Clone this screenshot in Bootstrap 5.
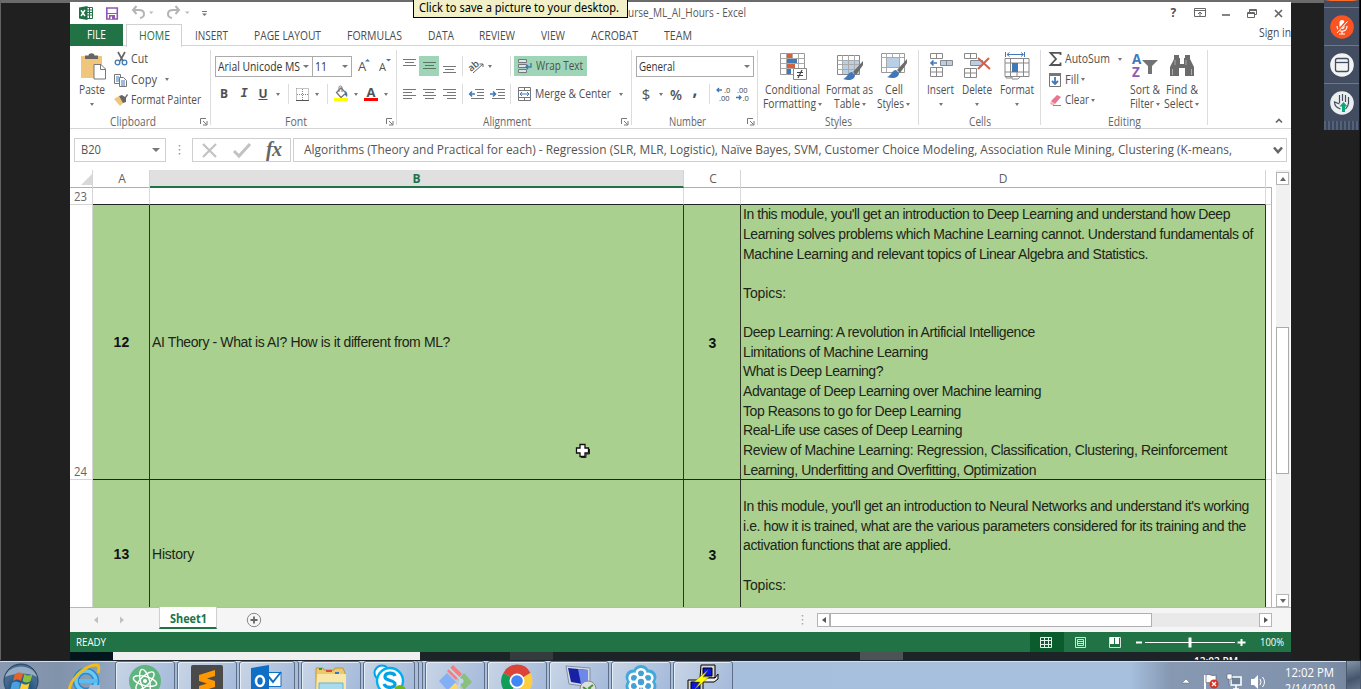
<!DOCTYPE html>
<html lang="en">
<head>
<meta charset="utf-8">
<title>Excel</title>
<link rel="stylesheet" href="https://cdn.jsdelivr.net/npm/bootstrap@5.3.0/dist/css/bootstrap.min.css">
<style>
body{width:1361px;height:689px;overflow:hidden;background:#202020;font-family:"Open Sans","Noto Sans",sans-serif;font-size:12px;line-height:1;color:#505050}
svg{display:block;flex:none;overflow:visible}
[data-w]{white-space:pre;display:inline-block;line-height:14px;flex:none;transform-origin:0 50%}
.desktop{width:1361px;height:660px;border-top:3px solid #6b6b6b;border-left:1px solid #626262;padding-left:69px}
.app{width:1221px;margin-top:-1px;background:#fff;height:658px}
/* title bar and tabs */
.titlebar{height:22px;padding-left:9px}
.titlebar .save{margin:0 13px}
.titlebar .doc{margin-left:429px;color:#5a5a5a}
.winbtns{margin-left:auto;display:grid;grid-template-columns:26px 26px 26px 26px 26px;justify-items:center;align-items:center}
.tabs{height:22px;border-bottom:1px solid #d5d5d5;display:grid;grid-template-columns:53px 3px 56px 59px 93px 81px 51px 62px 50px 73px 55px 1fr;justify-items:center;align-items:center;color:#4c4c4c}
.tabs>*{display:flex;justify-content:center;align-items:center}
.tabs .file{background:#217346;color:#fff;width:53px;height:22px;align-self:start}
.tabs .home{border:1px solid #d0d0d0;border-bottom:0;height:23px;width:56px;color:#217346;background:#fff;align-self:start}
.tabs .sign{justify-self:end;align-self:start;padding-top:2px}
/* ribbon */
.ribbon{height:83px;border-bottom:1px solid #d5d5d5}
.grp{display:flex;flex-direction:column;position:relative;height:82px;flex:none}
.grp::after{content:"";position:absolute;right:0;top:4px;height:75px;width:1px;background:#dcdcdc}
.grp .body{height:68px}
.grp .cap{height:14px;display:flex;justify-content:center;align-items:center;color:#666}
.grp .cap.lx{padding-right:15px}
.grp .cap [data-w]{padding-top:1px}
.launch{position:absolute;right:3px;bottom:2px}
.g1{width:141px}.g2{width:186px}.g3{width:235px}.g4{width:126px}.g5{width:161px}.g6{width:122px}.g7{width:167px}
.caret{width:0;height:0;border:solid transparent;border-width:3px 2.5px 0;border-top-color:#777;flex:none}
.combo .caret{border-width:3px 3px 0}
.vsep{width:1px;height:20px;background:#dcdcdc}
.big{display:flex;flex-direction:column;align-items:center;padding-top:6px}
.big svg{margin-bottom:3px}
.big .ln{height:14px;display:flex;align-items:center;gap:2px}
.rows{padding-top:3px}
.rrow{height:20.5px;display:flex;align-items:center}
.rrow .tight{margin-left:2px}
.ic{width:17px;flex:none}
.edit{width:81px}
.edit .ic{width:16px}
.gr{display:grid;justify-items:center;align-items:center}
.r1{height:20px;margin-top:10px}
.r2{height:22px;margin-top:7px}
.fr1{grid-template-columns:98px 39px 24px 15px;margin-left:4px}
.fr1>svg{margin-top:-3px}
.fr2{grid-template-columns:20px 20px 18px 12px 8px 20px 10px 10px 18px 11px 20px 10px;margin-left:3px}
.ar1{grid-template-columns:20px 20px 20px 7px 20px 8px 13px 7px 73px;margin-left:2px}
.ar2{grid-template-columns:20px 20px 20px 7px 21px 20px 7px 116px;margin-left:2px}
.nr1{margin-left:4px;width:118px}
.nr2{grid-template-columns:22px 7px 24px 14px 14px 14px 26px;grid-template-rows:22px;margin-left:3px}
.combo{border:1px solid #ababab;height:21px;width:100%;display:flex;align-items:center;justify-content:space-between;padding:0 3px 0 2px;color:#333}
.combo+.combo{margin-left:-1px;width:40px}
.hl{background:#9fd5b7;height:20px;width:100%;display:flex;align-items:center;justify-content:center}
.cur{font-size:15px;line-height:14px}
.comma{font-size:17px;line-height:14px;padding-bottom:8px}
.g5 .body{padding-left:5px;gap:4px}
.g6 .body{padding-left:8px;gap:8px}
/* formula bar */
.fbar{height:41px;padding:9px 4px 0 4px}
.fbox{border:1px solid #cfcfcf;height:24px;display:flex;align-items:center;background:#fff;color:#555}
.namebox{width:92px;padding:0 5px 0 6px}
.namebox .caret{border-width:4px 4px 0}
.fx{width:99px;margin-right:2px}
.ftext{padding:0 3px 0 10px}
/* grid */
.hdr{display:grid;grid-template-columns:23px 57px 534px 57px 525px 6px;height:18px;border-bottom:1px solid #b0b0b0;background:#fff;color:#606060}
.hdr>*{display:flex;align-items:center;justify-content:center;border-right:1px solid #d5d5d5;padding-left:2px}
.hdr .sel{background:#e0e0e0;color:#217346;font-weight:700;border-bottom:2px solid #217346;height:18px;padding:2px 0 0}
.hdr>:nth-child(5){padding-left:0}
.sheet{width:1202px;border-right:1px solid #b5b5b5}
.srow{display:grid;grid-template-columns:23px 57px 534px 57px 525px 5px;grid-template-rows:minmax(0,1fr)}
.srow>*{border-right:1px solid #dadada;border-bottom:1px solid #dadada}
.srow>:last-child{border-right:0}
.srow .rh{display:flex;align-items:flex-end;justify-content:center;color:#666;border-color:#d5d5d5}
.srow .cc{background:#a9d08e;border-right-color:#2c3426;border-bottom-color:#222;color:#1d2419;font:14px "Liberation Sans",sans-serif;display:flex;align-items:center;padding-top:2px}
.srow .cc.num{justify-content:center;font-weight:700;color:#111;padding-left:1px}
.srow .cc [data-w]{line-height:19.63px}
.blankrow>*{border-bottom-color:#222!important}
.blankrow>.rh,.blankrow>:last-child{border-bottom-color:#d5d5d5!important}
.srow .long{flex-direction:column;align-items:flex-start;padding:0 0 0 2px}
.row24 .long{padding-top:.4px!important}
.srow .txt{padding-left:2px}
.gap{height:19.63px;flex:none}
.blankrow{height:17px}.row24{height:275px}.row25{height:127px}
.row25>*{border-bottom:0}
.srow.row25 .num,.srow.row25 .txt{padding-top:22px}
.srow.row25 .long{padding-top:17px}
.vs{width:14px;margin-left:4px;background:#f1f1f1;position:relative;height:437px}
.vs .thumb{position:absolute;top:157px;width:13px;height:147px;border:1px solid #ababab;background:#fff}
.vtop{position:absolute;top:2px}.vbot{position:absolute;bottom:0}
.abtn{width:13px;height:13px;border:1px solid #b5b5b5;background:#fff;display:flex;align-items:center;justify-content:center}
/* sheet tabs and status */
.sheetbar{height:25px;background:#f5f5f5;border-top:1px solid #b8b8b8;display:flex}
.stab{margin-left:32px;width:58px;height:22px;background:#fff;border:1px solid #cfcfcf;border-top:0;border-bottom:2px solid #217346;color:#217346;font-weight:700;display:flex;align-items:center;justify-content:center;margin-top:-1px;padding-top:3px}
.plus{margin:4px 0 0 29px}
.hs{margin:5px 19px 0 12px;width:455px;height:14px;background:#e9e9e9;display:flex}
.hs .thumb{width:322px;height:14px;background:#fff;border:1px solid #b0b0b0;margin-right:auto}
.hs .abtn{height:14px}
.status{height:20px;background:#217346;color:#fff;padding:0 7px 0 6px}
.status .vw{width:34px;height:20px;display:flex;align-items:center;justify-content:center}
.status .on{background:#0b5c2d;padding-right:1px}
.s11{font-size:10.500px}
.pct{margin-left:14px}
.remote{height:8px;background:#1c2428;overflow:hidden;display:flex;color:#fff;font-size:11px}
.rd1{width:43px;background:#03161d}.rd2{width:307px;background:#f0f0f0}.rd3{width:43px;background:#343b3f;margin-left:90px}.rd4{width:43px;background:#4b5357;margin-left:307px}
.rclk{margin-left:291px;margin-top:2px;font-weight:600}
/* side panel */
.side{position:absolute;left:1324px;top:0;width:35px;height:130px;background:#434d62}
.side .cell{height:38px;border-top:1px solid #6e788b;display:flex;align-items:center;justify-content:center}
.side .grip{height:9px;background:repeating-linear-gradient(90deg,#53617a 0 2px,#3c465b 2px 4px)}
.sidetop{height:7px;border-top:1px solid #fb6a28;border-left:7px solid #434d62;border-right:6px solid #434d62}
.edge{position:absolute;right:0;top:0;width:2px;height:660px;background:#000;border-left:1px solid #161616}
.tip{position:absolute;left:413px;top:-4px;width:215px;height:22px;border:1px solid #000;background:#f1f0c8;color:#000;padding:4px 0 0 5px;font-family:"Noto Sans",sans-serif;font-size:12px}
.cursor{position:absolute;left:575px;top:443px}
/* taskbar */
.taskbar{height:29px;border-top:1px solid #20262d;box-shadow:inset 0 1px #d3dfee;background:linear-gradient(90deg,#8999b1 0,#8192ab 60px,#91a5c0 110px,#a5bfdd 200px,#a6c0de 1130px,#8698b2 1170px,#8092ab 1320px,#71819a 1361px);display:flex;overflow:hidden}
.startic{width:36px;margin:2px 0 0 3px}.ieic{width:34px;margin:0 13px 0 29px;padding-top:2px}
.tb{width:60px;height:32px;border:1px solid #5d6e86;box-shadow:inset 1px 1px #e5edf7;background:linear-gradient(110deg,#c9d5e7,#b6c7df 50%,#a4badb);border-radius:3px 3px 0 0;margin-right:2px;flex:none;display:flex;justify-content:center;align-items:flex-start;padding-top:2px}
.stack1{box-shadow:inset 1px 1px #e5edf7,3px 0 #a9bdd9,4px 0 #5d6e86;width:56px;margin-right:6px}
.stack2{box-shadow:inset 1px 1px #e5edf7,3px 0 #a9bdd9,4px 0 #5d6e86,7px 0 #a9bdd9,8px 0 #5d6e86;width:52px;margin-right:10px}
.tray{margin-left:auto;display:flex;color:#fff;width:179px}
.clock{width:52px;text-align:center;padding-top:5px;margin-left:12px}
.clock div{height:16px}
.peek{width:15px;border-left:1px solid #4a596d;border-right:1px solid #4a596d;background:linear-gradient(160deg,#8494a8,#45566c 60%,#6b7a8d);height:29px;margin-left:auto}
</style>
</head>
<body>
<svg width="0" height="0" class="position-absolute">
<defs>
<g id="launch" fill="none" stroke="#777"><path d="M.5 6V.5H6M3 3l3.500 3.500M7 3v4H3"/></g>
<g id="brush"><path d="M27 6 17 17l3 3L27 10z" fill="#6b6b6b"/><path d="M16 17c-4 0-4 5-9 7 6 2 12 1 12-4z" fill="#4179b8"/></g>
</defs>
</svg>
<div class="desktop">
<main class="app d-flex flex-column">
<header class="titlebar d-flex align-items-center">
  <svg width="14" height="14"><path d="M7 1.500h6.500v11H7" fill="#fff" stroke="#217346"/><path d="M8 4h5M8 6.500h5M8 9h5M10.500 2v10" stroke="#217346"/><path d="M0 1.500 8.500 0v14L0 12.500z" fill="#1e7145"/><path d="M2 4.300 6 10M6 4 2 10" stroke="#fff" stroke-width="1.500"/></svg>
  <svg width="12" height="13" class="save"><path d="M.8 1h10.500v11H.8z" fill="#fff" stroke="#9155b4" stroke-width="1.600"/><path d="M3 8h6v4H3z" fill="#9155b4"/><path d="M4.500 9.500h1.500V12H4.500z" fill="#fff"/><path d="M1 6.500h10" stroke="#9155b4"/></svg>
  <svg width="68" height="14" fill="none" stroke="#b4b4b4" stroke-width="2"><path d="M5.500 0 2 4l3.500 4M2 4h6c6.500 0 6.500 7 1 8"/><path d="M44.500 0 48 4l-3.500 4M48 4h-6c-6.500 0-6.500 7-1 8"/><path d="M18 5.500h4.500L20.200 8zM54 5.500h4.500L56.200 8z" fill="#bbb" stroke="none"/><path d="M71 5.500h5" stroke="#777" stroke-width="1"/><path d="M71 7.500h5L73.500 10z" fill="#777" stroke="none"/></svg>
  <span class="doc" data-w="118">urse_ML_AI_Hours - Excel</span>
  <div class="winbtns">
    <b data-w="7">?</b>
    <svg width="12" height="10" fill="none" stroke="#666"><path d="M.5.5h11v8H.5zM.5 2.500h11M6 8V4M4 6l2-2 2 2"/></svg>
    <svg width="8" height="6"><path d="M0 5h8" stroke="#666" stroke-width="1.600"/></svg>
    <svg width="10" height="9" fill="none" stroke="#666"><path d="M.5 3.500h7v5h-7zM.5 4.500h7M2.500 3V.5h7v5H8M2.500 1.500h7"/></svg>
    <svg width="9" height="9"><path d="M1 1l7 7M8 1 1 8" stroke="#666" stroke-width="1.700"/></svg>
  </div>
</header>
<nav class="tabs">
  <span class="file"><span data-w="19">FILE</span></span><i></i>
  <span class="home"><span data-w="31">HOME</span></span>
  <span><span data-w="33">INSERT</span></span><span><span data-w="67">PAGE LAYOUT</span></span><span><span data-w="55">FORMULAS</span></span><span><span data-w="26">DATA</span></span><span><span data-w="36">REVIEW</span></span><span><span data-w="24">VIEW</span></span><span><span data-w="47">ACROBAT</span></span><span><span data-w="28">TEAM</span></span>
  <span class="sign"><span data-w="32">Sign in</span></span>
</nav>
<section class="ribbon d-flex">
  <div class="grp g1">
    <div class="body d-flex">
      <div class="big ps-1"><svg width="36" height="28" viewBox="4 0 36 28"><path d="M11 4h21v22H11z" fill="#efc67c"/><path d="M15 7V3.500h3.500c0-3 6-3 6 0H28V7z" fill="#666"/><path d="M24 12.500h7l4.500 4.500v10H24z" fill="#fff" stroke="#777"/><path d="M30.500 12.500V17.500h5" fill="none" stroke="#777"/></svg><div class="ln"><span data-w="26">Paste</span></div><div class="ln"><i class="caret"></i></div></div>
      <div class="rows ms-1">
        <div class="rrow"><svg class="ic" width="17" height="14" fill="none"><path d="M4 0l5 9M11 0 6 9" stroke="#666" stroke-width="1.700"/><circle cx="3.500" cy="10.500" r="2.300" stroke="#4179b8" stroke-width="1.300"/><circle cx="10.500" cy="10.500" r="2.300" stroke="#4179b8" stroke-width="1.300"/></svg><span data-w="17">Cut</span></div>
        <div class="rrow"><svg class="ic" width="17" height="14" fill="#fff" stroke="#777"><path d="M.5 1.500h6v9h-6z"/><path d="M5.500 4.500h4l3 3v6h-7z"/><path d="M2 4h3M2 6h3M2 8h3M7 8h4M7 10h4M7 12h4" stroke="#4179b8"/></svg><span data-w="26">Copy</span><i class="caret ms-2"></i></div>
        <div class="rrow"><svg class="ic" width="17" height="14"><path d="M0 6 5 3l5 6-4 4z" fill="#efc67c"/><path d="M5 3l3-1 3 2 2-3 1 1-2 3v4l-3 1z" fill="#666"/></svg><span data-w="70">Format Painter</span></div>
      </div>
    </div>
    <div class="cap lx"><span data-w="46">Clipboard</span></div><svg class="launch" width="8" height="8"><use href="#launch"/></svg>
  </div>
  <div class="grp g2">
    <div class="body">
      <div class="gr r1 fr1"><div class="combo"><span data-w="82">Arial Unicode MS</span><i class="caret"></i></div><div class="combo"><span data-w="12">11</span><i class="caret"></i></div>
        <svg width="12" height="14"><text x="0" y="13" font-size="13" fill="#555">A</text><path d="M7 3.500 9.500 1 12 3.500z" fill="#4179b8"/></svg><svg width="12" height="14"><text x="1" y="13" font-size="11" fill="#555">A</text><path d="M8 1h5l-2.500 2.500z" fill="#4179b8"/></svg></div>
      <div class="gr r2 fr2"><b>B</b><i class="fw-bold font-monospace">I</i><b class="text-decoration-underline">U</b><i class="caret"></i><i class="vsep"></i>
        <svg width="13" height="13" fill="none" stroke="#888"><path d="M.5.5h12v12M.5.5v12M6.500 1v11M1 6.500h11" stroke-dasharray="1 1"/><path d="M0 12.500h13" stroke="#555"/></svg><i class="caret"></i><i class="vsep"></i>
        <svg width="15" height="16"><path d="M2.500 6.500 7 2l5 5-5 4.500z" fill="#fff" stroke="#777" stroke-width="1.300"/><path d="M5 6V1.500c0-2 3-2 3 0V6" fill="none" stroke="#777"/><path d="M11 5c2 1 3 3 2 6l-2-2z" fill="#4179b8"/><path d="M0 12h14v3H0z" fill="#ffff00"/></svg><i class="caret"></i>
        <svg width="14" height="16"><text x="2.500" y="10.500" font-size="13" font-weight="700" fill="#555">A</text><path d="M0 12h14v3H0z" fill="#f00"/></svg><i class="caret"></i></div>
    </div>
    <div class="cap lx"><span data-w="22">Font</span></div><svg class="launch" width="8" height="8"><use href="#launch"/></svg>
  </div>
  <div class="grp g3">
    <div class="body">
      <div class="gr r1 ar1">
        <svg width="13" height="14" stroke="#777"><path d="M0 .5h13M2 3.500h9M0 6.500h13"/></svg><span class="hl"><svg width="13" height="8" stroke="#5b7566"><path d="M0 .5h13M2 3.500h9M0 6.500h13"/></svg></span><svg width="13" height="14" stroke="#777"><path d="M0 7.500h13M2 10.500h9M0 13.500h13"/></svg><i class="vsep"></i>
        <svg width="15" height="14"><text x="-1" y="9" font-size="9.500" font-weight="600" transform="rotate(-40 6 7)" fill="#555">ab</text><path d="M4 14 14 5M10.500 5H14v3" fill="none" stroke="#666"/></svg><i class="caret"></i><i></i><i class="vsep"></i>
        <span class="hl"><svg width="14" height="14" class="me-1"><path d="M.5.5h8v3h-8zM.5 5.500h8v3h-8zM.5 10.500h8v3h-8z" fill="#d8e6f4" stroke="#777"/><path d="M13 4v4H8M10 6 8 8l2 2" fill="none" stroke="#4179b8" stroke-width="1.400"/></svg><span data-w="47">Wrap Text</span></span></div>
      <div class="gr r2 ar2">
        <svg width="13" height="10" stroke="#777"><path d="M0 .5h13M0 3.500h9M0 6.500h13M0 9.500h9"/></svg><svg width="13" height="10" stroke="#777"><path d="M0 .5h13M2 3.500h9M0 6.500h13M2 9.500h9"/></svg><svg width="13" height="10" stroke="#777"><path d="M0 .5h13M4 3.500h9M0 6.500h13M4 9.500h9"/></svg><i class="vsep"></i>
        <svg width="15" height="10" stroke="#777" fill="none"><path d="M6 .5h9M8 3.500h7M8 6.500h7M2 9.500h13"/><path d="M6 5H1M3 2.500.7 5 3 7.500" stroke="#4179b8" stroke-width="1.600"/></svg><svg width="15" height="10" stroke="#777" fill="none"><path d="M6 .5h9M8 3.500h7M8 6.500h7M2 9.500h13"/><path d="M0 5h5M3 2.500 5.500 5 3 7.500" stroke="#4179b8" stroke-width="1.600"/></svg><i class="vsep"></i>
        <span class="d-flex align-items-center w-100 ps-1"><svg width="13" height="14" class="me-1" fill="#fff" stroke="#777"><path d="M.5.5h12v13H.5zM.5 3.500h12M.5 10.500h12M6.500 0v3M6.500 11v3"/><path d="M2 7h9M4 5 2 7l2 2M9 5l2 2-2 2" stroke="#4179b8" fill="none"/></svg><span data-w="76">Merge &amp; Center</span><i class="caret ms-2"></i></span></div>
    </div>
    <div class="cap lx"><span data-w="48">Alignment</span></div><svg class="launch" width="8" height="8"><use href="#launch"/></svg>
  </div>
  <div class="grp g4">
    <div class="body">
      <div class="r1 nr1"><div class="combo"><span data-w="36">General</span><i class="caret"></i></div></div>
      <div class="gr r2 nr2"><span class="cur">$</span><i class="caret"></i><span data-w="12" class="fw-semibold cur">%</span><b class="comma">,</b><i class="vsep"></i>
        <svg width="15" height="14"><text x="8" y="6" font-size="7.500" fill="#444">.0</text><text x="3" y="14" font-size="7.500" fill="#444">.00</text><path d="M6 3H1M3 1 1 3l2 2" fill="none" stroke="#4179b8" stroke-width="1.300"/></svg>
        <svg width="15" height="14"><text x="1" y="6" font-size="7.500" fill="#444">.00</text><text x="6.500" y="14" font-size="7.500" fill="#444">.0</text><path d="M0 10.500h5M3 8.500l2 2-2 2" fill="none" stroke="#4179b8" stroke-width="1.300"/></svg></div>
    </div>
    <div class="cap lx"><span data-w="37">Number</span></div><svg class="launch" width="8" height="8"><use href="#launch"/></svg>
  </div>
  <div class="grp g5">
    <div class="body d-flex">
      <div class="big"><svg width="28" height="28"><path d="M1.500 1.500h24v21h-24z" fill="#fff" stroke="#999"/><path d="M8 2h5v5H8zM8 12h8v5H8z" fill="#d65f3c"/><path d="M8 7h10v5H8zM8 17h4v5H8z" fill="#4179b8"/><path d="M1.500 6.500h24M1.500 11.500h24M1.500 16.500h24M7.500 1.500v21M19.500 1.500v21M13.500 1.500v5" stroke="#aaa"/><path d="M14.500 16.500h13v11h-13z" fill="#fff" stroke="#888"/><path d="M18 20.500h6M18 23.500h6M23 18l-4 8" stroke="#444" stroke-width="1.200"/></svg><div class="ln"><span data-w="55">Conditional</span></div><div class="ln"><span data-w="53">Formatting</span><i class="caret"></i></div></div>
      <div class="big"><svg width="28" height="28"><path d="M1.500 3.500h22v19h-22z" fill="#fff" stroke="#888"/><path d="M7 8h16v14H7z" fill="#b8cfe6"/><path d="M1.500 8.500h22M1.500 12.500h22M1.500 17.500h22M6.500 3v19M12.500 3v19M18.500 3v19" stroke="#aaa"/><use href="#brush" y="3"/></svg><div class="ln"><span data-w="47">Format as</span></div><div class="ln"><span data-w="26">Table</span><i class="caret"></i></div></div>
      <div class="big"><svg width="28" height="28"><path d="M1.500 1.500h23v19h-23z" fill="#fff" stroke="#999"/><path d="M1.500 5.500h23M1.500 15.500h23M6.500 1v19M19.500 1v19M12.500 1v4" stroke="#aaa"/><path d="M7 6h12v9H7z" fill="#b8cfe6"/><use href="#brush" y="1"/></svg><div class="ln"><span data-w="18">Cell</span></div><div class="ln"><span data-w="27">Styles</span><i class="caret"></i></div></div>
    </div>
    <div class="cap"><span data-w="27">Styles</span></div>
  </div>
  <div class="grp g6">
    <div class="body d-flex">
      <div class="big"><svg width="24" height="28" fill="#fff" stroke="#888"><path d="M1.500 1.500h12v5h-12zM7.500 1v5"/><path d="M11.500 8.500h12v5h-12zM17.500 8v5" fill="#b8cfe6"/><path d="M1.500 15.500h12v9h-12zM7.500 15v9M1.500 20h12"/><path d="M8 11H2M4.500 8.500 2 11l2.500 2.500" fill="none" stroke="#4179b8" stroke-width="1.600"/></svg><div class="ln"><span data-w="27">Insert</span></div><div class="ln"><i class="caret"></i></div></div>
      <div class="big"><svg width="26" height="28" fill="#fff" stroke="#888"><path d="M.5 1.500h12v5H.500zM6.500 1v5"/><path d="M6.500 8.500h12v5h-12z" fill="#b8cfe6"/><path d="M.5 16.500h12v9H.5zM6.500 16v9M.5 21h12"/><path d="M14 6l12 11M25 6 14 17" stroke="#d0604a" stroke-width="2" fill="none"/></svg><div class="ln"><span data-w="30">Delete</span></div><div class="ln"><i class="caret"></i></div></div>
      <div class="big"><svg width="26" height="28" fill="none" stroke="#888"><path d="M1 6.500h24v18H1zM1 11h24M1 20h24M6.500 6v18M19.500 6v18M13 20v4M2 24v2h5v-2M8 24v3h6l3-3"/><path d="M8 11h6v9H8z" fill="#4179b8" stroke="none"/><path d="M1.500 0v5M20.500 0v5M3 2.500h16M5.500.5 3 2.500l2.500 2M17 .5l2.500 2-2.500 2" stroke="#4179b8"/></svg><div class="ln"><span data-w="34">Format</span></div><div class="ln"><i class="caret"></i></div></div>
    </div>
    <div class="cap"><span data-w="22">Cells</span></div>
  </div>
  <div class="grp g7">
    <div class="body d-flex ps-2">
      <div class="rows edit">
        <div class="rrow"><svg class="ic" width="16" height="14"><path d="M11.500 3V.8H1.500L7 7l-5.500 6h10v-2.500" fill="none" stroke="#555" stroke-width="1.800"/></svg><span data-w="45">AutoSum</span><i class="caret ms-2"></i></div>
        <div class="rrow"><svg class="ic" width="16" height="14"><path d="M.5.5h11v13H.5z" fill="#fff" stroke="#777"/><path d="M0 0h12v3H0z" fill="#777"/><path d="M6 4v7M3 8l3 3 3-3" fill="none" stroke="#4179b8" stroke-width="1.800"/></svg><span data-w="14">Fill</span><i class="caret tight"></i></div>
        <div class="rrow"><svg class="ic" width="16" height="12"><path d="M2 7 8 1l4 2-6 7z" fill="#e8768f"/><path d="M2 7l4 3-2 1.500L1 10z" fill="#f3b4c2"/><path d="M4 11.500h8" stroke="#888"/></svg><span data-w="24">Clear</span><i class="caret tight"></i></div>
      </div>
      <div class="big"><svg width="28" height="28"><text x="1" y="12" font-size="13.500" font-weight="700" fill="#4179b8">A</text><text x="1" y="25" font-size="13.500" font-weight="700" fill="#8e5bb5">Z</text><path d="M11 8h16l-6 6v8h-4v-8z" fill="#737373"/></svg><div class="ln"><span data-w="30">Sort &amp;</span></div><div class="ln"><span data-w="24">Filter</span><i class="caret"></i></div></div>
      <div class="big ms-1"><svg width="26" height="28" fill="#6b6b6b"><path d="M5 3h5v3h1v6h4V6h1V3h5v4l4 8v9h-9v-8h-6v8H1v-9l4-8z"/><path d="M3.500 17v6M22.500 17v6M6 8v5M17 8v5" stroke="#bbb" stroke-width=".8"/></svg><div class="ln"><span data-w="32">Find &amp;</span></div><div class="ln"><span data-w="29">Select</span><i class="caret"></i></div></div>
    </div>
    <div class="cap"><span data-w="33">Editing</span></div>
  </div>
  <svg width="8" height="6" class="ms-auto mt-auto mb-1 me-2"><path d="M1 4.500 4 1.500l3 3" fill="none" stroke="#666" stroke-width="1.700"/></svg>
</section>
<section class="fbar d-flex">
  <div class="fbox namebox"><span data-w="20">B20</span><i class="caret ms-auto"></i></div>
  <svg width="26" height="24"><path d="M13.500 7v10" stroke="#999" stroke-width="1.500" stroke-dasharray="1.500 2.500"/></svg>
  <div class="fbox fx"><svg width="97" height="22"><path d="M10 5l13 13M23 5 10 18" stroke="#c2c2c2" stroke-width="2.200"/><path d="M41 12l5 5L57 5" fill="none" stroke="#c2c2c2" stroke-width="3"/><text x="73" y="17" font-family="Liberation Serif" font-style="italic" font-size="20" font-weight="700" fill="#666" textLength="16">fx</text></svg></div>
  <div class="fbox flex-grow-1 ftext"><span data-w="928">Algorithms (Theory and Practical for each) - Regression (SLR, MLR, Logistic), Naïve Bayes, SVM, Customer Choice Modeling, Association Rule Mining, Clustering (K-means,</span><svg width="10" height="8" class="ms-auto"><path d="M1 1.500 5 6l4-4.500" fill="none" stroke="#666" stroke-width="2.500"/></svg></div>
</section>
<section class="d-flex">
  <div>
    <div class="hdr"><span><svg width="11" height="11" class="ms-2"><path d="M11 0v11H0z" fill="#d9d9d9"/></svg></span><span>A</span><span class="sel">B</span><span>C</span><span>D</span></div>
    <div class="sheet">
      <div class="srow blankrow"><div class="rh"><span data-w="13">23</span></div><div></div><div></div><div></div><div></div><div></div></div>
      <div class="srow row24"><div class="rh"><span data-w="13">24</span></div><div class="cc num"><span data-w="16">12</span></div><div class="cc txt"><span data-w="298">AI Theory - What is AI? How is it different from ML?</span></div><div class="cc num"><span>3</span></div>
        <div class="cc long"><span data-w="487">In this module, you'll get an introduction to Deep Learning and understand how Deep</span><span data-w="510">Learning solves problems which Machine Learning cannot. Understand fundamentals of</span><span data-w="405">Machine Learning and relevant topics of Linear Algebra and Statistics.</span><i class="gap"></i><span data-w="43">Topics:</span><i class="gap"></i><span data-w="292">Deep Learning: A revolution in Artificial Intelligence</span><span data-w="185">Limitations of Machine Learning</span><span data-w="140">What is Deep Learning?</span><span data-w="298">Advantage of Deep Learning over Machine learning</span><span data-w="218">Top Reasons to go for Deep Learning</span><span data-w="219">Real-Life use cases of Deep Learning</span><span data-w="484">Review of Machine Learning: Regression, Classification, Clustering, Reinforcement</span><span data-w="293">Learning, Underfitting and Overfitting, Optimization</span></div><div></div></div>
      <div class="srow row25"><div class="rh"></div><div class="cc num"><span data-w="16">13</span></div><div class="cc txt"><span data-w="42">History</span></div><div class="cc num"><span>3</span></div>
        <div class="cc long"><span data-w="506">In this module, you'll get an introduction to Neural Networks and understand it's working</span><span data-w="503">i.e. how it is trained, what are the various parameters considered for its training and the</span><span data-w="208">activation functions that are applied.</span><i class="gap"></i><span data-w="43">Topics:</span></div><div></div></div>
    </div>
  </div>
  <div class="vs"><div class="vtop"><div class="abtn"><svg width="6" height="4"><path d="M0 4 3 0l3 4z" fill="#666"/></svg></div></div><div class="thumb"></div><div class="vbot"><div class="abtn"><svg width="6" height="4"><path d="M0 0h6L3 4z" fill="#666"/></svg></div></div></div>
</section>
<section class="sheetbar">
  <svg width="57" height="24"><path d="M28 8.500v7l-4-3.500zM50 8.500v7l4-3.500z" fill="#c0c0c0"/></svg>
  <div class="stab"><span data-w="37">Sheet1</span></div>
  <svg width="16" height="16" class="plus"><circle cx="8" cy="8" r="6.700" fill="none" stroke="#888"/><path d="M8 4.500v7M4.500 8h7" stroke="#666" stroke-width="1.800"/></svg>
  <svg width="4" height="24" class="ms-auto"><path d="M1.500 7v12" stroke="#aaa" stroke-width="1.500" stroke-dasharray="1.500 2.500"/></svg>
  <div class="hs"><div class="abtn"><svg width="4" height="6"><path d="M4 0v6L0 3z" fill="#555"/></svg></div><div class="thumb"></div><div class="abtn"><svg width="4" height="6"><path d="M0 0v6l4-3z" fill="#555"/></svg></div></div>
</section>
<footer class="status d-flex align-items-center">
  <span data-w="30" class="s11">READY</span>
  <span class="vw on ms-auto"><svg width="12" height="11" fill="none" stroke="#e6f0ea"><path d="M.5.5h11v10H.5zM.5 3.500h11M.5 7.500h11M4.500.5v10M8.500.5v10"/></svg></span>
  <span class="vw"><svg width="11" height="11" fill="none" stroke="#cfe3d7"><path d="M.5.5h10v10H.5zM2.500 2.500h6v6h-6zM3 4.500h5M3 6.500h5"/></svg></span>
  <span class="vw"><svg width="12" height="11"><path d="M.5.5h11v10H.5z" fill="none" stroke="#cfe3d7"/><path d="M1 0h4v7H1zM6 0h4v7H6z" fill="#fff"/></svg></span>
  <svg width="110" height="20" class="ms-1" stroke="#fff"><path d="M0 10.500h6M101.500 10.500h8M105.500 7v7" stroke-width="2"/><path d="M9 10.500h90"/><path d="M54 5.500v10" stroke-width="3"/></svg>
  <span data-w="24" class="s11 pct">100%</span>
</footer>
<div class="remote"><i class="rd1"></i><i class="rd2"></i><i class="rd3"></i><i class="rd4"></i><span data-w="44" class="rclk">12:02 PM</span></div>
</main>
</div>
<aside class="side">
  <div class="sidetop"></div>
  <div class="cell"><svg width="24" height="24"><circle cx="12" cy="12" r="11.800" fill="#fb5422"/><rect x="9.500" y="5" width="5" height="9" rx="2.500" fill="#fff"/><path d="M7 11c0 7 10 7 10 0M12 16v3M9 19h6" fill="none" stroke="#fff" stroke-width="1.200"/><path d="M6.500 17.500 17 6" stroke="#fb5422" stroke-width="2.500"/><path d="M7 18 17.500 6.500" stroke="#fff"/></svg></div>
  <div class="cell"><svg width="24" height="24"><circle cx="12" cy="12" r="11.800" fill="#f2f4f3"/><rect x="5.500" y="5.500" width="13" height="13" rx="2" fill="none" stroke="#434d62" stroke-width="1.300"/><path d="M6 9.500h12" stroke="#434d62" stroke-width="1.300"/></svg></div>
  <div class="cell"><svg width="24" height="24"><circle cx="12" cy="12" r="11.800" fill="#eceff0"/><path d="M9.500 12V4M12.500 10V3M15.500 11V4M18.500 13V6M9.500 13l-5-2c0 4 3 6 6 7M18.500 12c0 3-1 4-3 6" fill="none" stroke="#434d62" stroke-width="1.200"/><path d="M13.500 11l4 4.500h-2.500V21h-3v-5.500H9.500z" fill="#0da678"/></svg></div>
  <div class="grip"></div>
</aside>
<div class="edge"></div>
<div class="tip"><span data-w="200">Click to save a picture to your desktop.</span></div>
<svg class="cursor" width="15" height="15"><path d="M5 1.500h5V5h3.500v5H10v3.500H5V10H1.500V5H5z" fill="#fff" stroke="#111" stroke-width="1.300"/><path d="M6 14.500h5V11h3.500V6" fill="none" stroke="#222"/></svg>
<footer class="taskbar">
  <div class="startic"><svg width="36" height="30"><defs><radialGradient id="orb" cy=".8"><stop stop-color="#4bb4dc"/><stop offset=".6" stop-color="#1d5687"/><stop offset="1" stop-color="#456a8f"/></radialGradient></defs><circle cx="18" cy="18" r="17" fill="url(#orb)" stroke="#26425c"/><path d="M2 14C6 0 30 0 34 14 24 9 12 10 2 14z" fill="#c9d8e6" opacity=".6"/><path d="M12 11c3-2 5-2 8 0l-2 7c-3-2-5-2-8 0z" fill="#e8622a"/><path d="M21.500 11c3 2 5 2 8 0l-2 7c-3 2-5 2-8 0z" fill="#8dbf3a"/><path d="M9 20c3-2 5-2 8 0l-2 8H7z" fill="#4c9fde"/><path d="M18.500 20c3 2 5 2 8 0l-2 8h-8z" fill="#fbcf35"/></svg></div>
  <div class="ieic"><svg width="34" height="30"><circle cx="18" cy="18" r="10" fill="none" stroke="#2489cf" stroke-width="6.500"/><circle cx="18" cy="18" r="10" fill="none" stroke="#6cc8f2" stroke-width="3.500"/><path d="M11 18h18" stroke="#5bbcf0" stroke-width="4"/><path d="M22 22h10v5H20z" fill="#a5b9d3"/><path d="M2 29C-1 20 16 2 28 2c4 0 3 5 2 8" fill="none" stroke="#f3bd18" stroke-width="2.800"/></svg></div>
  <div class="tb"><svg width="32" height="32"><circle cx="16" cy="17" r="16" fill="#5fb57d"/><g fill="none" stroke="#fff" stroke-width="1.400"><ellipse cx="16" cy="17" rx="4.500" ry="12" transform="rotate(-15 16 17)"/><ellipse cx="16" cy="17" rx="4.500" ry="12" transform="rotate(45 16 17)"/><ellipse cx="16" cy="17" rx="4.500" ry="12" transform="rotate(105 16 17)"/></g><circle cx="16" cy="17" r="2" fill="#fff"/></svg></div>
  <div class="tb"><svg width="32" height="30"><rect y="1" width="32" height="32" rx="2" fill="#4a4a4a"/><path d="M24 6 8 11v6l8 2.500-8 2.500v6l16-5v-6l-8-2.500 8-2.500z" fill="#ff9800"/></svg></div>
  <div class="tb stack1"><svg width="32" height="30"><path d="M15 8.500h15v14H15z" fill="#fff" stroke="#0f6fc6"/><path d="m17 12 5 6 8-10" fill="none" stroke="#0f6fc6" stroke-width="2"/><path d="M0 4 18 1v31L0 28z" fill="#0f6fc6"/><ellipse cx="9" cy="17" rx="4" ry="5" fill="none" stroke="#fff" stroke-width="2.600"/></svg></div>
  <div class="tb"><svg width="32" height="30"><path d="M1 7V4h7l1 2h10l1-2h8l2 5v21H1z" fill="#ecc96a" stroke="#bd9740"/><path d="M2 10h29v20H1z" fill="#f8e7a6"/><path d="M4 4h3v2H4z" fill="#19a83a"/><path d="M11 6h6v2h-6z" fill="#d94b3a"/><path d="M20 8h4v2h-4z" fill="#2d7ad1"/><path d="M4 19h24v10H4z" fill="#a8dbee" stroke="#65b3d1"/></svg></div>
  <div class="tb stack2"><svg width="32" height="30"><circle cx="9" cy="9" r="7.500" fill="#fff" stroke="#00a3e6" stroke-width="2"/><circle cx="17" cy="17" r="13" fill="#fff" stroke="#00aff0" stroke-width="2.400"/><path d="M22 12c-1-4-10-4-10 1 0 4 10 3 10 7s-9 5-11 0" fill="none" stroke="#00a3e6" stroke-width="3.300"/><circle cx="27" cy="27" r="6" fill="#72b51a"/></svg></div>
  <div class="tb"><svg width="34" height="30"><path d="m1 17 8-8 9 9-8 9z" fill="#83b0f5"/><path d="m9 7 6-6 9 9-6 6z" fill="#fa7b7b"/><path d="m20 16 6-7 8 9-8 8z" fill="#88c07c"/><path d="m17 19 9 9-8 8-9-9z" fill="#f8d971"/><path d="m11 4 12 12-5 14" stroke="#c5d3e6" stroke-width="2" fill="none"/><circle cx="23" cy="17" r="2.500" fill="#c5d3e6"/></svg></div>
  <div class="tb"><svg width="32" height="30"><path d="M16 17 2.500 9a15 15 0 0 1 27 0z" fill="#db4437"/><path d="M16 17 2.500 9a15.500 15.500 0 0 0 6 22z" fill="#0f9d58"/><path d="M16 17 29.500 9a15.500 15.500 0 0 1-8 22z" fill="#ffcd40"/><circle cx="16" cy="17" r="7.500" fill="#fff"/><circle cx="16" cy="17" r="5.800" fill="#4285f4"/></svg></div>
  <div class="tb"><svg width="32" height="30"><path d="M3 2 27 4v19L6 20z" fill="#d5dbe2" stroke="#8290a0"/><path d="M5 4 25 6v15L8 18z" fill="#1721a4"/><path d="m15 5 10 1v15l-7-1z" fill="#6d87ea"/><circle cx="25" cy="25" r="8" fill="#dedede" stroke="#888"/><path d="m20 23 4 3-3 4M30 21l-4 3 4 4" fill="none" stroke="#3e9a32" stroke-width="2"/></svg></div>
  <div class="tb"><svg width="32" height="30"><g fill="#43a9dc"><circle cx="16" cy="9" r="8"/><circle cx="8" cy="13" r="7.500"/><circle cx="24" cy="13" r="7.500"/><circle cx="8" cy="22" r="7.500"/><circle cx="24" cy="22" r="7.500"/></g><g fill="#43a1d5" stroke="#fff" stroke-width="2.600"><circle cx="16" cy="9.500" r="4.300"/><circle cx="9" cy="14" r="4.300"/><circle cx="23" cy="14" r="4.300"/><circle cx="9" cy="22" r="4.300"/><circle cx="23" cy="22" r="4.300"/><circle cx="16" cy="18" r="4.500"/></g></svg></div>
  <div class="tb"><svg width="32" height="30"><g stroke="#000"><path d="M14 1h14v13H13z" fill="#d6d6d6"/><path d="M16 4h9v8h-9z" fill="#0b16e5"/><path d="M13 14h15l3-4v5l-4 3H13z" fill="#efefef"/><path d="M1 16h15v15H1z" fill="#d6d6d6"/><path d="M4 18h9v10H4z" fill="#0b16e5"/><path d="M21 6 7 18h6l-5 7 14-12h-6z" fill="#ff0" stroke="#776f00" stroke-width=".5"/></g></svg></div>
  <div class="tray">
    <svg width="90" height="28"><path d="m0 22 4-4 4 4z" fill="#fff" stroke="#5a6980" stroke-width=".5"/><path d="M23 14v14" stroke="#fff" stroke-width="2"/><path d="M24 14c4-2 5 2 10 0v8c-5 2-6-2-10 0z" fill="#fff" stroke="#5a6470" stroke-width=".7"/><circle cx="32" cy="23" r="4.500" fill="#d93020"/><path d="m30 21 4 4m0-4-4 4" stroke="#fff" stroke-width="1.300"/><path d="M49 16h10v8H49zM51 28h6M54 24v4" fill="#6e8198" stroke="#fff" stroke-width="1.600"/><path d="M45 13h5v5h-2v6h-1v-6h-2z" fill="#fff" stroke="#55606e" stroke-width=".6"/><path d="M69 18h3l4-4v14l-4-4h-3z" fill="#fff"/><path d="M78 18q2 3 0 6M80.500 16q4 5 0 10" fill="none" stroke="#fff"/></svg>
    <div class="clock"><div><span data-w="49">12:02 PM</span></div><div><span data-w="50">2/14/2019</span></div></div>
    <div class="peek"></div>
  </div>
</footer>
<script src="https://cdn.jsdelivr.net/npm/bootstrap@5.3.0/dist/js/bootstrap.bundle.min.js"></script>
<script>
// Fit each label to the width in data-w: cell text by tracking, interface text by condensing.
document.querySelectorAll('[data-w]').forEach(function (el) {
  var want = +el.dataset.w, have = el.getBoundingClientRect().width;
  if (el.closest('.cc') || have < want) {
    el.style.letterSpacing = ((want - have) / el.textContent.length).toFixed(3) + 'px';
  } else {
    el.style.transform = 'scaleX(' + (want / have).toFixed(4) + ')';
    el.style.marginRight = (want - have).toFixed(2) + 'px';
  }
});
</script>
</body>
</html>
